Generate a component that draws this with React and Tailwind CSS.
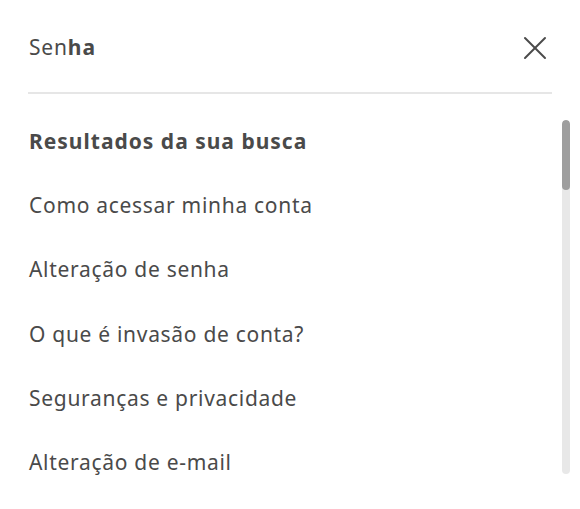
import { X } from 'lucide-react'

const results = [
  'Como acessar minha conta',
  'Alteração de senha',
  'O que é invasão de conta?',
  'Seguranças e privacidade',
  'Alteração de e-mail',
]

const App = () => {
  return (
    <div className="w-[580px] h-[509px] bg-white text-[#4a4a4a] overflow-hidden" style={{ fontFamily: '"Noto Sans", sans-serif' }}>
      <header className="flex items-center justify-between pl-[29px] pr-[25px] h-[92px] pt-[3px]">
        <p className="text-[21px] tracking-[0.8px]">
          Sen<span className="font-bold tracking-[1px]">ha</span>
        </p>
        <button className="text-[#4a4a4a]">
          <X size={40} strokeWidth={1.2} />
        </button>
      </header>
      <div className="mx-[28px] h-[2px] bg-[#e6e6e6]" />

      <div className="flex pl-[29px] pr-[10px] pt-[26px]">
        <div className="flex-1 flex flex-col text-[21px] tracking-[0.7px]">
          <p className="font-bold tracking-[1px] leading-[30px] h-[40px] pt-[5.5px]">Resultados da sua busca</p>
          {results.map((r) => (
            <p key={r} className="leading-[30px] mt-[24.4px] h-[40px] pt-[5.5px]">{r}</p>
          ))}
        </div>
        <div className="w-[8px] h-[354px] rounded-full bg-[#e8e8e8] overflow-hidden">
          <div className="h-[70px] rounded-full bg-[#9e9e9e]" />
        </div>
      </div>
    </div>
  )
}

export default App
